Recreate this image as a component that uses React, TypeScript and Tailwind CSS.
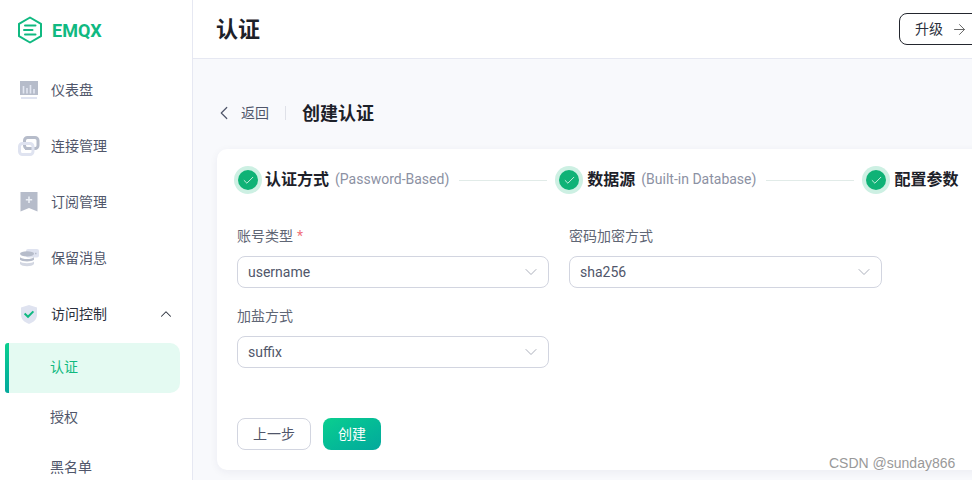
import React from 'react';
import { ArrowRight, Check, ChevronDown, ChevronLeft, ChevronUp } from 'lucide-react';

const Logo = () => (
  <svg width="26" height="28" viewBox="0 0 26 28" fill="none">
    <path d="M13 1.5 L24 7.8 V20.2 L13 26.5 L2 20.2 V7.8 Z" stroke="#10b981" strokeWidth="2" strokeLinejoin="round" />
    <path d="M8 9.5 H18.5 M7 14 H15.5 M8 18.5 H18.5" stroke="#10b981" strokeWidth="2" strokeLinecap="round" />
  </svg>
);

const DashIcon = () => (
  <svg width="18" height="18" viewBox="0 0 18 18">
    <rect x="0" y="0" width="18" height="14" fill="#b6bcca" />
    <path d="M3.5 5V12.5M7 7V12.5M10.5 4V12.5M14 8V12.5" stroke="#e3e7f2" strokeWidth="1.6" />
    <rect x="1" y="16" width="16" height="2" fill="#dfe3f0" />
  </svg>
);

const LinkIcon = () => (
  <svg width="22" height="20" viewBox="0 0 22 20" fill="none">
    <rect x="6.5" y="1.5" width="13.5" height="11" rx="3" stroke="#b6bcca" strokeWidth="3" />
    <rect x="1.5" y="7.5" width="13.5" height="11" rx="3" stroke="#dfe3f0" strokeWidth="3" />
    <path d="M7 13H13" stroke="#b6bcca" strokeWidth="2" />
  </svg>
);

const SubIcon = () => (
  <svg width="18" height="20" viewBox="0 0 18 20">
    <path d="M0.5 0H17.5V19.5L9 16L0.5 19.5Z" fill="#b6bcca" />
    <path d="M9 4.5V11M5.8 7.8H12.2" stroke="#eceff6" strokeWidth="1.6" />
  </svg>
);

const RetainIcon = () => (
  <svg width="19" height="18" viewBox="0 0 19 18">
    <rect x="6" y="0" width="13" height="8.5" rx="2" fill="#dfe3f0" />
    <path d="M9 4.5H10.5M12 4.5H13.5M15 4.5H16.5" stroke="#b6bcca" strokeWidth="1.4" />
    <ellipse cx="7" cy="4.8" rx="7" ry="2.6" fill="#b6bcca" />
    <path d="M0 8.2C2 10.6 12 10.6 14 8.2V10.8C12 13 2 13 0 10.8Z" fill="#b6bcca" />
    <path d="M0 12.5C2 14.8 12 14.8 14 12.5V15C12 18 2 18 0 15Z" fill="#d3d7e2" />
  </svg>
);

const ShieldIcon = () => (
  <svg width="16" height="19" viewBox="0 0 16 19">
    <path d="M8 0L16 2.6V10C16 14.5 12 17.5 8 19C4 17.5 0 14.5 0 10V2.6Z" fill="#dfe3f0" />
    <path d="M3.6 8.6L7 11.8L12.4 6.4" stroke="#10b981" strokeWidth="2" fill="none" />
  </svg>
);

const menu = [
  { label: '仪表盘', icon: <DashIcon /> },
  { label: '连接管理', icon: <LinkIcon /> },
  { label: '订阅管理', icon: <SubIcon /> },
  { label: '保留消息', icon: <RetainIcon /> },
];

const StepDot = () => (
  <span className="flex h-[28px] w-[28px] shrink-0 items-center justify-center rounded-full bg-[#cdf0e3]">
    <span className="flex h-[20px] w-[20px] items-center justify-center rounded-full bg-[#0fb276]">
      <Check size={13} strokeWidth={1.4} className="text-white" />
    </span>
  </span>
);

const Field = ({ label, value, required, className }: { label: string; value: string; required?: boolean; className: string }) => (
  <div className={className}>
    <div className="mb-[10px] h-[20px] text-[14px] leading-[20px] text-[#5f6675]">
      {label}
      {required && <span className="ml-1 text-[#f1727a]">*</span>}
    </div>
    <div className="flex h-[32px] items-center justify-between rounded-[8px] border border-[#d2d5e0] bg-white pl-[10px] pr-[7px] text-[14px] text-[#50566a]">
      <span>{value}</span>
      <ChevronDown size={20} strokeWidth={1.1} className="text-[#a3a7b5]" />
    </div>
  </div>
);

export default function App() {
  return (
    <div className="relative flex h-[480px] w-[972px] overflow-hidden bg-white font-['Roboto','Noto_Sans_CJK_SC',sans-serif]">
      {/* Sidebar */}
      <aside className="w-[193px] shrink-0 border-r border-[#e6e8f2] bg-white">
        <div className="mb-[2px] flex h-[60px] items-center gap-[9px] pl-[17px]">
          <Logo />
          <span className="text-[18px] font-bold text-[#10b981]">EMQX</span>
        </div>
        <nav>
          {menu.map(m => (
            <div key={m.label} className="flex h-[56px] items-center">
              <span className="flex w-[51px] shrink-0 justify-center pl-[7px]">{m.icon}</span>
              <span className="text-[14px] text-[#50566a]">{m.label}</span>
            </div>
          ))}
          <div className="flex h-[56px] items-center">
            <span className="flex w-[51px] shrink-0 justify-center pl-[7px]">
              <ShieldIcon />
            </span>
            <span className="text-[14px] text-[#2a2f3c]">访问控制</span>
            <ChevronUp size={18} strokeWidth={1.4} className="ml-[50px] text-[#2a2f3c]" />
          </div>
          <div className="relative ml-[5px] mt-[1px] flex h-[50px] w-[175px] items-center overflow-hidden rounded-l-[3px] rounded-r-[10px] bg-[#e4faf2] pb-[2px] pl-[45px] text-[14px] text-[#0fb97f]">
            <span className="absolute bottom-0 left-0 top-0 w-[4px] bg-gradient-to-b from-[#0bcf8f] to-[#04a89c]" />
            认证
          </div>
          <div className="flex h-[50px] items-center pb-[2px] pl-[50px] text-[14px] text-[#50566a]">授权</div>
          <div className="flex h-[50px] items-center pb-[2px] pl-[50px] text-[14px] text-[#50566a]">黑名单</div>
        </nav>
      </aside>

      <div className="min-w-0 flex-1">
        {/* Header */}
        <header className="flex h-[59px] items-center justify-between border-b border-[#e6e8f2] bg-white pl-[23px]">
          <h1 className="text-[22px] font-bold text-[#1d2129]">认证</h1>
          <button className="-mr-[30px] flex h-[32px] w-[103px] items-center gap-[8px] rounded-[8px] border border-[#23262e] bg-white pl-[15px] text-[14px] text-[#2a2f3c]">
            升级
            <ArrowRight size={17} strokeWidth={1.4} className="text-[#666]" />
          </button>
        </header>

        {/* Main */}
        <main className="h-[421px] overflow-hidden bg-[#f8f9fc] pl-[24px] pt-[42px]">
          <div className="flex h-[24px] items-center">
            <ChevronLeft size={22} strokeWidth={1.3} className="-ml-[4px] text-[#50566a]" />
            <span className="ml-[6px] text-[14px] text-[#50566a]">返回</span>
            <span className="mx-[16px] h-[14px] w-px bg-[#dfe1e8]" />
            <span className="text-[18px] font-bold text-[#1d2129]">创建认证</span>
          </div>

          <section className="mt-[24px] h-[321px] w-[790px] rounded-[10px] bg-white pl-[20px] pt-[17px] shadow-[0_2px_8px_rgba(30,40,80,0.06)]">
            {/* Steps */}
            <div className="-ml-[3px] flex h-[28px] items-center whitespace-nowrap">
              <StepDot />
              <span className="ml-[3px] text-[16px] font-bold text-[#1d2129]">认证方式</span>
              <span className="mb-[2px] ml-[6px] text-[14px] text-[#8c91a3]">(Password-Based)</span>
              <span className="ml-[10px] mr-[8px] h-px w-[88px] bg-[#e1ebe8]" />
              <StepDot />
              <span className="ml-[4px] text-[16px] font-bold text-[#1d2129]">数据源</span>
              <span className="mb-[2px] ml-[6px] text-[14px] text-[#8c91a3]">(Built-in Database)</span>
              <span className="ml-[10px] mr-[8px] h-px w-[88px] bg-[#e1ebe8]" />
              <StepDot />
              <span className="ml-[4px] text-[16px] font-bold text-[#1d2129]">配置参数</span>
            </div>

            {/* Form */}
            <div className="mt-[32px] flex gap-[20px]">
              <Field className="w-[312px]" label="账号类型" value="username" required />
              <Field className="w-[313px]" label="密码加密方式" value="sha256" />
            </div>
            <div className="mt-[18px]">
              <Field className="w-[312px]" label="加盐方式" value="suffix" />
            </div>

            {/* Actions */}
            <div className="mt-[50px] flex gap-[12px]">
              <button className="h-[32px] w-[74px] rounded-[8px] border border-[#d2d5e0] bg-white text-[14px] text-[#50566a]">上一步</button>
              <button className="h-[32px] w-[58px] rounded-[8px] bg-gradient-to-br from-[#0bcf8f] to-[#04a89c] text-[14px] text-white">创建</button>
            </div>
          </section>
        </main>
      </div>

      {/* Watermark */}
      <span className="absolute left-[829px] top-[453px] whitespace-nowrap font-['Liberation_Sans',sans-serif] text-[14px] text-[#999]">CSDN @sunday866</span>
    </div>
  );
}
